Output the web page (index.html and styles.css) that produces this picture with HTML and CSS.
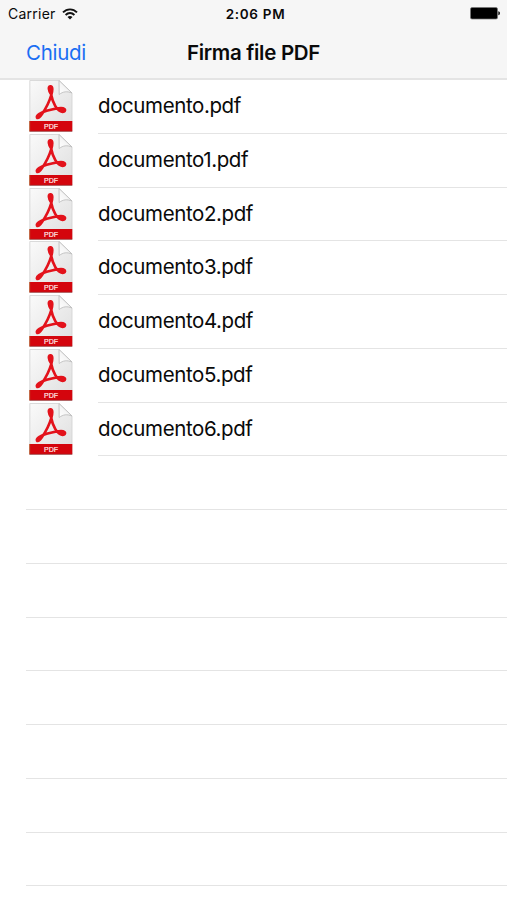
FILE: index.html
```html
<!DOCTYPE html>
<html lang="it">
<head>
    <meta charset="UTF-8">
    <meta name="viewport" content="width=device-width, initial-scale=1.0">
    <title>Firma file PDF</title>
    <link rel="stylesheet" href="styles.css">
</head>
<body>
    <svg class="defs" width="0" height="0">
        <defs>
            <linearGradient id="paper" x1="0" y1="0" x2="1" y2="1">
                <stop offset="0" stop-color="#fafafa"/>
                <stop offset="1" stop-color="#dedede"/>
            </linearGradient>
            <linearGradient id="fold" x1="0" y1="1" x2="1" y2="0">
                <stop offset="0" stop-color="#ffffff"/>
                <stop offset=".5" stop-color="#f4f4f4"/>
                <stop offset="1" stop-color="#b8b8b8"/>
            </linearGradient>
            <symbol id="pdf" viewBox="0 0 44 52">
                <path d="M.8.5H30L43 13V51H.8z" fill="url(#paper)" stroke="#d0d0d0" stroke-width=".8"/>
                <path d="M30 .5L43 13C38 11 34 11.5 30.2 14.5z" fill="url(#fold)" stroke="#bdbdbd" stroke-width=".9"/>
                <g fill="none" stroke="#e3121b" stroke-linecap="round" stroke-linejoin="round">
                    <path d="M22 14C20 11 18.8 6.5 21.2 6.3C24.2 6 23.3 11 22.3 15C20.3 22 16.5 29 13 34C11 37 8.8 39 8 37.5C7.2 35.5 11.5 32.5 17 31C23 29.4 30 27.3 34 28.3C37 29.3 36.4 31.8 33.4 31.8C28 31.4 23.7 23 22 14" stroke-width="2.7"/>
                    <path d="M21.3 8V12M31.5 30L34.4 30" stroke-width="3.2"/>
                </g>
                <path d="M.5 41H43.3V51.3H.5z" fill="#d4050d"/>
                <path d="M.5 51.3H43.3" stroke="#8d2d2d" stroke-width=".7"/>
                <path d="M.7 41V51.3" stroke="#b5642f" stroke-width=".8"/>
                <text x="22" y="48.6" class="pdf-label">PDF</text>
            </symbol>
        </defs>
    </svg>

    <div class="header">
        <div class="status">
            <div class="carrier">
                <span>Carrier</span>
                <svg class="wifi" width="16" height="12" viewBox="0 0 16 12">
                    <g fill="none" stroke="#111" stroke-width="1.9">
                        <path d="M1 4.4C5 .3 11 .3 15 4.4"/>
                        <path d="M3.6 7C6.2 4.4 9.8 4.4 12.4 7"/>
                    </g>
                    <path d="M5.5 9C7 7.6 9 7.6 10.5 9L8 11.6z" fill="#111"/>
                </svg>
            </div>
            <div class="time">2:06 PM</div>
            <svg class="battery" width="31" height="13" viewBox="0 0 31 13">
                <rect x=".5" y=".5" width="27" height="11.5" rx="1.5" fill="#000" stroke="#777" stroke-width=".7"/>
                <path d="M28.3 4.2C30.5 4.6 30.5 7.9 28.3 8.3z" fill="#111"/>
            </svg>
        </div>
        <div class="nav">
            <a class="close">Chiudi</a>
            <div class="title">Firma file PDF</div>
        </div>
    </div>

    <div class="list">
        <div class="row"><svg class="icon"><use href="#pdf"/></svg><div class="name">documento.pdf</div></div>
        <div class="row"><svg class="icon"><use href="#pdf"/></svg><div class="name">documento1.pdf</div></div>
        <div class="row"><svg class="icon"><use href="#pdf"/></svg><div class="name">documento2.pdf</div></div>
        <div class="row"><svg class="icon"><use href="#pdf"/></svg><div class="name">documento3.pdf</div></div>
        <div class="row"><svg class="icon"><use href="#pdf"/></svg><div class="name">documento4.pdf</div></div>
        <div class="row"><svg class="icon"><use href="#pdf"/></svg><div class="name">documento5.pdf</div></div>
        <div class="row"><svg class="icon"><use href="#pdf"/></svg><div class="name">documento6.pdf</div></div>
        <div class="row empty"></div>
        <div class="row empty"></div>
        <div class="row empty"></div>
        <div class="row empty"></div>
        <div class="row empty"></div>
        <div class="row empty"></div>
        <div class="row empty"></div>
        <div class="row empty"></div>
    </div>
</body>
</html>
```
FILE: styles.css
```css
*{
    margin: 0;
    padding: 0;
    box-sizing: border-box;
}
body{
    height: 900px;
    background: white;
    color: #0a0a0a;
    font-family: Inter, Roboto, "Liberation Sans", sans-serif;
    overflow: hidden;
}
.defs{
    display: block;
}
.header{
    height: 80px;
    background: #f6f6f6;
    border-bottom: 2px solid #e4e4e4;
}
.status{
    display: grid;
    grid-template-columns: 1fr auto 1fr;
    align-items: center;
    height: 27px;
    padding: 0 6px 0 8px;
}
.carrier{
    display: flex;
    align-items: center;
    gap: 6px;
    font-size: 14px;
    letter-spacing: 0.25px;
}
.time{
    padding-left: 2px;
    font-size: 13.5px;
    font-weight: 600;
    letter-spacing: 0.7px;
}
.battery{
    justify-self: end;
}
.nav{
    display: grid;
    grid-template-columns: 1fr auto 1fr;
    align-items: center;
    height: 51px;
    padding: 0 26px;
    font-size: 20.5px;
    letter-spacing: -0.3px;
}
.close{
    color: #1b6ef3;
}
.title{
    font-weight: 600;
}
.row{
    display: flex;
    height: 53.75px;
    padding-left: 29px;
}
.icon{
    width: 44px;
    height: 52px;
    margin-right: 25px;
    flex-shrink: 0;
}
.name{
    flex: 1;
    line-height: 52.5px;
    font-size: 20.5px;
    letter-spacing: -0.4px;
    border-bottom: 1px solid #e4e4e4;
}
.empty{
    padding: 0;
    margin-left: 26px;
    border-bottom: 1px solid #e4e4e4;
}
.pdf-label{
    font-family: "Liberation Sans", sans-serif;
    font-size: 7px;
    fill: #ffe9e9;
    stroke: #ffe9e9;
    stroke-width: 0.2px;
    text-anchor: middle;
}
```
